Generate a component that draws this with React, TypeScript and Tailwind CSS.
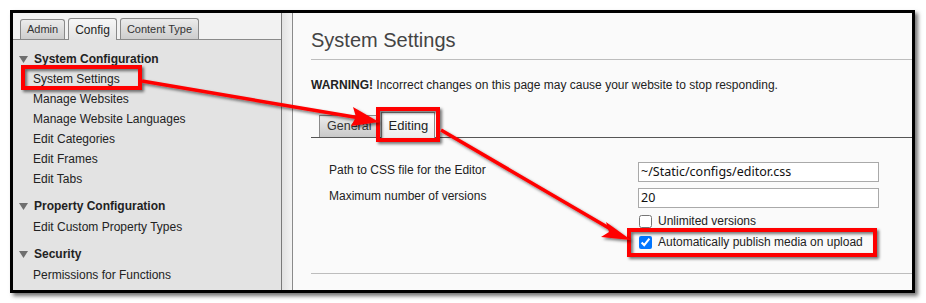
import React from "react";

const Tri = () => (
  <svg width="9" height="7" viewBox="0 0 9 7" className="shrink-0">
    <polygon points="0,0 9,0 4.5,7" fill="#6f6f6f" />
  </svg>
);

function Group({ title, items, first }: { title: string; items: string[]; first?: boolean }) {
  return (
    <div className={first ? "" : "mt-[7px]"}>
      <div className="flex items-center h-[20px] pl-[6px] gap-[6px]">
        <Tri />
        <span className="font-bold text-[12px] text-[#222]">{title}</span>
      </div>
      <div className={first ? "" : "mt-[1px]"}>
        {items.map((t) => (
          <div key={t} className="h-[20px] leading-[20px] pl-[20px] text-[12px] text-[#222]">
            {t}
          </div>
        ))}
      </div>
    </div>
  );
}

export default function App() {
  return (
    <div className="relative w-[926px] h-[303px] bg-white pl-[10px] pt-[10px] font-['Liberation_Sans',Arial,sans-serif]">
      <div className="w-[905px] h-[283px] border-[3px] border-black shadow-[3px_3px_4px_rgba(0,0,0,0.55)] flex overflow-hidden">
        {/* Sidebar */}
        <div className="w-[269px] shrink-0 bg-[#e3e3e3] border-r border-[#7a7a7a] flex flex-col">
          <div className="h-[27px] bg-[#f2f2f2] border-b border-[#8a8a8a] flex items-end pl-[7px] gap-[3px]">
            <div className="h-[20px] px-[6px] flex items-center text-[11px] text-[#333] border border-b-0 border-[#8a8a8a] rounded-t-[3px] bg-gradient-to-b from-[#ececec] to-[#cdcdcd]">
              Admin
            </div>
            <div className="h-[22px] -mb-px px-[6px] flex items-center text-[12px] text-[#222] border border-b-0 border-[#8a8a8a] rounded-t-[3px] bg-gradient-to-b from-[#f7f7f7] to-[#e3e3e3]">
              Config
            </div>
            <div className="h-[21px] px-[6px] flex items-center text-[11px] text-[#333] border border-b-0 border-[#8a8a8a] rounded-t-[3px] bg-gradient-to-b from-[#ececec] to-[#cdcdcd]">
              Content Type
            </div>
          </div>
          <div className="pt-[9px]">
            <Group
              first
              title="System Configuration"
              items={["System Settings", "Manage Websites", "Manage Website Languages", "Edit Categories", "Edit Frames", "Edit Tabs"]}
            />
            <Group title="Property Configuration" items={["Edit Custom Property Types"]} />
            <Group title="Security" items={["Permissions for Functions"]} />
          </div>
        </div>
        {/* Splitter */}
        <div className="w-[11px] shrink-0 border-r border-[#8a8a8a] bg-gradient-to-r from-[#e2e2e2] to-[#f3f3f3]" />
        {/* Main */}
        <div className="flex-1 bg-[#fafafa] pl-[18px] flex flex-col">
          <div className="h-[47px] pt-[15px] border-b border-[#bdbdbd]">
            <h1 className="text-[20px] leading-[24px] text-[#444]">System Settings</h1>
          </div>
          <div className="mt-[17px] text-[12px] leading-[16px] text-[#222]">
            <b>WARNING!</b> Incorrect changes on this page may cause your website to stop responding.
          </div>
          <div className="mt-[19px] h-[26px] border-b border-[#555] flex items-end pl-[8px]">
            <div className="h-[22px] px-[7px] flex items-center text-[12.5px] text-[#333] border border-b-0 border-[#8a8a8a] bg-gradient-to-b from-[#ececec] to-[#c9c9c9]">
              General
            </div>
            <div className="h-[26px] -mb-px ml-[2px] px-[6px] flex items-center text-[13px] text-[#222] border border-b-0 border-[#8a8a8a] bg-gradient-to-b from-[#ffffff] to-[#ededed]">
              Editing
            </div>
          </div>
          <div className="mt-[24px] pl-[18px] grid grid-cols-[309px_241px] gap-y-[6px] text-[12px] text-[#222]">
            <div className="pt-[1px] leading-[14px]">Path to CSS file for the Editor</div>
            <div className="h-[20px] border border-[#a9a9a9] bg-white px-[2px] text-[12.5px] leading-[18px] text-[#111] font-['Noto_Sans',sans-serif]">
              ~/Static/configs/editor.css
            </div>
            <div className="pt-[1px] leading-[14px]">Maximum number of versions</div>
            <div className="h-[20px] border border-[#a9a9a9] bg-white px-[2px] text-[12.5px] leading-[18px] text-[#111] font-['Noto_Sans',sans-serif]">
              20
            </div>
            <div />
            <div className="flex flex-col gap-[7px]">
              <label className="flex items-center gap-[6px] h-[14px]">
                <input type="checkbox" className="m-0 ml-[1px] w-[13px] h-[13px]" />
                <span>Unlimited versions</span>
              </label>
              <label className="flex items-center gap-[6px] h-[14px]">
                <input type="checkbox" defaultChecked className="m-0 ml-[1px] w-[13px] h-[13px] accent-[#0075ff]" />
                <span>Automatically publish media on upload</span>
              </label>
            </div>
          </div>
          <div className="mt-[24px] border-t border-[#bdbdbd]" />
        </div>
      </div>

      {/* Annotations */}
      <svg className="absolute left-0 top-0 pointer-events-none" width="926" height="303" viewBox="0 0 926 303">
        <defs>
          <filter id="sh" x="-20%" y="-20%" width="140%" height="140%">
            <feDropShadow dx="2" dy="2" stdDeviation="1.5" floodColor="#000" floodOpacity="0.55" />
          </filter>
        </defs>
        <g filter="url(#sh)" fill="none" stroke="#ff0000" strokeWidth="4">
          <rect x="23" y="67" width="117" height="21" />
          <rect x="378" y="109" width="60" height="31" />
          <rect x="629" y="230" width="246" height="25" />
          <line x1="142" y1="81" x2="360" y2="118" strokeWidth="3.5" />
          <line x1="441" y1="130" x2="614" y2="231" strokeWidth="3.5" />
        </g>
        <g filter="url(#sh)" fill="#ff0000">
          <polygon points="379,122 353,107 356,117 351,126" />
          <polygon points="631,240 606,222 609,232 601,237" />
        </g>
      </svg>
    </div>
  );
}
